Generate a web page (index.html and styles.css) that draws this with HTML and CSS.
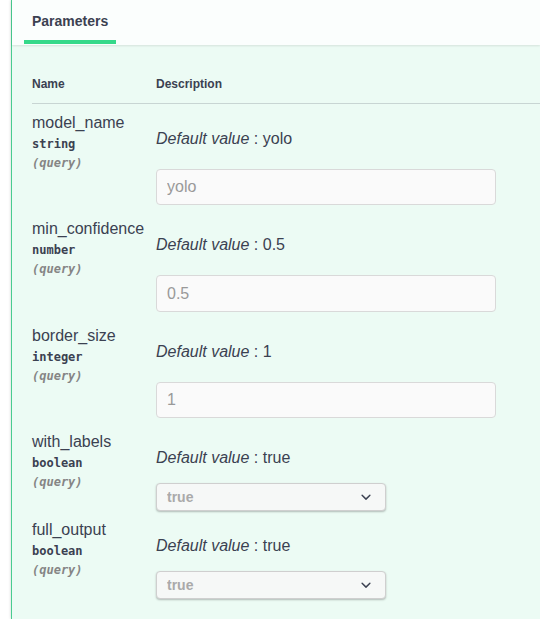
FILE: index.html
```html
<!DOCTYPE html>
<html lang="en">
<head>
<meta charset="utf-8">
<title>Parameters</title>
<link rel="stylesheet" href="styles.css">
</head>
<body>
<div class="opblock">
  <div class="section-header">
    <div class="tab">Parameters</div>
  </div>
  <div class="table-container">
    <div class="params-head">
      <div>Name</div>
      <div>Description</div>
    </div>

    <div class="param">
      <div class="col-name">
        <div class="param-name">model_name</div>
        <div class="param-type">string</div>
        <div class="param-in">(query)</div>
      </div>
      <div class="col-desc">
        <p class="default"><i>Default value</i> : yolo</p>
        <input class="text-input" type="text" placeholder="yolo">
      </div>
    </div>

    <div class="param">
      <div class="col-name">
        <div class="param-name">min_confidence</div>
        <div class="param-type">number</div>
        <div class="param-in">(query)</div>
      </div>
      <div class="col-desc">
        <p class="default"><i>Default value</i> : 0.5</p>
        <input class="text-input" type="text" placeholder="0.5">
      </div>
    </div>

    <div class="param">
      <div class="col-name">
        <div class="param-name">border_size</div>
        <div class="param-type">integer</div>
        <div class="param-in">(query)</div>
      </div>
      <div class="col-desc">
        <p class="default"><i>Default value</i> : 1</p>
        <input class="text-input" type="text" placeholder="1">
      </div>
    </div>

    <div class="param">
      <div class="col-name">
        <div class="param-name">with_labels</div>
        <div class="param-type">boolean</div>
        <div class="param-in">(query)</div>
      </div>
      <div class="col-desc">
        <p class="default"><i>Default value</i> : true</p>
        <div class="select-wrap">
          <select class="select" disabled><option>true</option></select>
          <svg class="chevron" viewBox="0 0 20 20" width="20" height="20"><path d="M13.418 7.859a.695.695 0 0 1 .978 0 .68.68 0 0 1 0 .969l-3.908 3.83a.697.697 0 0 1-.979 0l-3.908-3.830a.68.68 0 0 1 0-.969.695.695 0 0 1 .978 0L10 11l3.418-3.141z"/></svg>
        </div>
      </div>
    </div>

    <div class="param">
      <div class="col-name">
        <div class="param-name">full_output</div>
        <div class="param-type">boolean</div>
        <div class="param-in">(query)</div>
      </div>
      <div class="col-desc">
        <p class="default"><i>Default value</i> : true</p>
        <div class="select-wrap">
          <select class="select" disabled><option>true</option></select>
          <svg class="chevron" viewBox="0 0 20 20" width="20" height="20"><path d="M13.418 7.859a.695.695 0 0 1 .978 0 .68.68 0 0 1 0 .969l-3.908 3.83a.697.697 0 0 1-.979 0l-3.908-3.830a.68.68 0 0 1 0-.969.695.695 0 0 1 .978 0L10 11l3.418-3.141z"/></svg>
        </div>
      </div>
    </div>
  </div>
</div>
</body>
</html>
```

FILE: styles.css
```css
* { box-sizing: border-box; }

html, body {
  margin: 0;
  background: #ffffff;
}

body {
  font-family: "Liberation Sans", Arial, sans-serif;
  color: #3b4151;
  overflow: hidden;
}

.opblock {
  margin-left: 11px;
  min-height: 619px;
  border-left: 1px solid #49cc90;
  background: #ecfbf4;
  box-shadow: 0 0 3px rgba(0, 0, 0, 0.19);
}

.section-header {
  height: 45px;
  padding: 12px 20px 0;
  background: rgba(255, 255, 255, 0.8);
  box-shadow: 0 1px 2px rgba(0, 0, 0, 0.1);
}

.tab {
  display: inline-block;
  margin-left: -8px;
  padding: 0 8px 11px;
  border-bottom: 4px solid #36d98a;
  font-size: 14px;
  font-weight: 700;
  line-height: 16px;
}

.table-container {
  padding: 20px 0 0 20px;
}

.params-head {
  display: grid;
  grid-template-columns: 124px 1fr;
  padding: 12px 0;
  border-bottom: 1px solid rgba(59, 65, 81, 0.2);
  font-size: 12px;
  font-weight: 700;
  line-height: 14px;
}

.param {
  display: grid;
  grid-template-columns: 124px 1fr;
  align-items: start;
}

.col-name {
  padding: 10px 0;
  white-space: nowrap;
}

.param-name {
  font-size: 16px;
  line-height: 18px;
}

.param-type,
.param-in {
  font-family: "DejaVu Sans Mono", "Liberation Mono", monospace;
  font-size: 12px;
  font-weight: 700;
  line-height: 14px;
}

.param-type {
  padding: 5px 0;
}

.param-in {
  font-style: italic;
  color: #858585;
}

.col-desc {
  display: flex;
  flex-direction: column;
  align-items: flex-start;
  padding-top: 10px;
}

.default {
  margin: 16px 0;
  font-size: 16px;
  line-height: 18px;
}

.text-input {
  display: block;
  width: 340px;
  height: 36.4px;
  margin: 5px 0;
  padding: 8px 10px;
  border: 1px solid #d9d9d9;
  border-radius: 4px;
  background: #fafafa;
  font-family: "Liberation Sans", Arial, sans-serif;
  font-size: 16px;
  line-height: 18px;
  color: #3b4151;
  outline: none;
}

.text-input::placeholder {
  color: #999999;
}

.select-wrap {
  position: relative;
  width: 230px;
}

.select {
  display: block;
  width: 230px;
  height: 28px;
  margin: 0;
  padding: 5px 40px 5px 10px;
  -webkit-appearance: none;
  appearance: none;
  border: 1px solid #cfcfcf;
  border-radius: 4px;
  background: #f6f8f7;
  box-shadow: 0 1px 2px rgba(0, 0, 0, 0.25);
  font-family: "Liberation Sans", Arial, sans-serif;
  font-size: 14px;
  font-weight: 700;
  line-height: 16px;
  color: #aaaaaa;
  opacity: 1;
}

.chevron {
  position: absolute;
  right: 10px;
  top: 4px;
  fill: #3b4151;
  pointer-events: none;
}
```
